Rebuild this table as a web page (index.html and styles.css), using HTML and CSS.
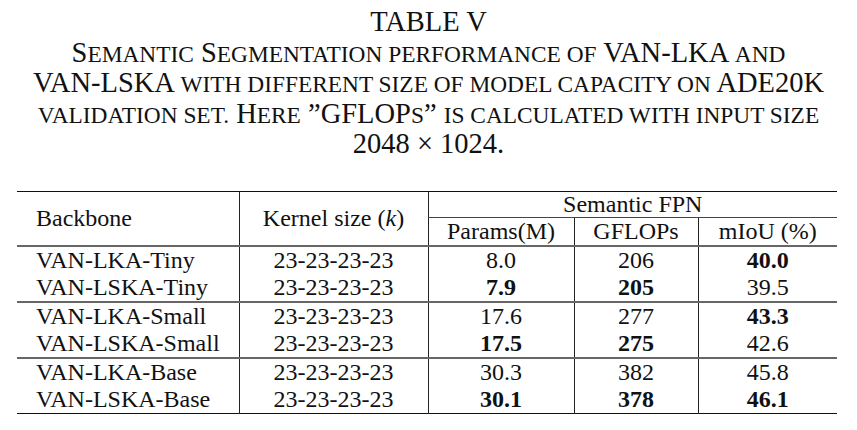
FILE: index.html
```html
<!DOCTYPE html>
<html lang="en">

<head>
  <meta charset="UTF-8">
  <title>Table V</title>
  <link rel="stylesheet" href="styles.css">
</head>

<body>

  <div class="page">
    <p class="caption">
      <span class="title">TABLE V</span><br>
      S<span class="sc">emantic</span> S<span class="sc">egmentation performance of</span> VAN-LKA <span class="sc">and</span><br>
      VAN-LSKA <span class="sc">with different size of model capacity on</span> ADE20K<br>
      <span class="sc">validation set.</span> H<span class="sc">ere</span> ”GFLOP<span class="sc">s</span>” <span class="sc">is calculated with input size</span><br>
      2048 × 1024.
    </p>

    <table class="results">
      <colgroup>
        <col class="c-backbone">
        <col class="c-kernel">
        <col class="c-params">
        <col class="c-flops">
        <col class="c-miou">
      </colgroup>
      <thead>
        <tr>
          <th rowspan="2" class="name">Backbone</th>
          <th rowspan="2" class="sep">Kernel size (<i>k</i>)</th>
          <th colspan="3" class="sep group-head">Semantic FPN</th>
        </tr>
        <tr class="sub">
          <th class="sep">Params(M)</th>
          <th class="sep">GFLOPs</th>
          <th class="sep">mIoU (%)</th>
        </tr>
      </thead>
      <tbody>
        <tr>
          <td class="name">VAN-LKA-Tiny</td>
          <td class="sep">23-23-23-23</td>
          <td class="sep">8.0</td>
          <td class="sep">206</td>
          <td class="sep"><b>40.0</b></td>
        </tr>
        <tr>
          <td class="name">VAN-LSKA-Tiny</td>
          <td class="sep">23-23-23-23</td>
          <td class="sep"><b>7.9</b></td>
          <td class="sep"><b>205</b></td>
          <td class="sep">39.5</td>
        </tr>
      </tbody>
      <tbody>
        <tr>
          <td class="name">VAN-LKA-Small</td>
          <td class="sep">23-23-23-23</td>
          <td class="sep">17.6</td>
          <td class="sep">277</td>
          <td class="sep"><b>43.3</b></td>
        </tr>
        <tr>
          <td class="name">VAN-LSKA-Small</td>
          <td class="sep">23-23-23-23</td>
          <td class="sep"><b>17.5</b></td>
          <td class="sep"><b>275</b></td>
          <td class="sep">42.6</td>
        </tr>
      </tbody>
      <tbody>
        <tr>
          <td class="name">VAN-LKA-Base</td>
          <td class="sep">23-23-23-23</td>
          <td class="sep">30.3</td>
          <td class="sep">382</td>
          <td class="sep">45.8</td>
        </tr>
        <tr>
          <td class="name">VAN-LSKA-Base</td>
          <td class="sep">23-23-23-23</td>
          <td class="sep"><b>30.1</b></td>
          <td class="sep"><b>378</b></td>
          <td class="sep"><b>46.1</b></td>
        </tr>
      </tbody>
    </table>
  </div>

</body>

</html>
```

FILE: styles.css
```css
body {
  margin: 0;
  background: #fff;
  color: #111;
  font-family: "Liberation Serif", "Times New Roman", serif;
}

.page {
  width: 857px;
  padding-top: 7px;
}

.caption {
  margin: 0;
  text-align: center;
  font-size: 28.5px;
  line-height: 30.5px;
}

.caption .sc {
  text-transform: uppercase;
  font-size: 0.82em;
  line-height: 1;
}

.results {
  margin: 31px 0 0 17px;
  width: 820px;
  border-collapse: collapse;
  font-size: 24px;
  line-height: 27px;
}

.c-backbone { width: 222px; }
.c-kernel { width: 189px; }
.c-params { width: 146px; }
.c-flops { width: 124px; }
.c-miou { width: 139px; }

.results th,
.results td {
  padding: 0;
  font-weight: normal;
  text-align: center;
  white-space: nowrap;
}

.results .name {
  text-align: left;
  padding-left: 19px;
}

.results .sep {
  border-left: 1px solid #222;
}

.results thead tr:first-child th {
  border-top: 1px solid #111;
}

.results .group-head {
  border-bottom: 1px solid #444;
  line-height: 24px;
  padding-bottom: 1px;
}

.results .sub th {
  line-height: 27px;
}

.results tbody {
  border-top: 2px solid #666;
}

.results tbody:last-child {
  border-bottom: 1px solid #111;
}

.results b {
  font-weight: bold;
}
```
